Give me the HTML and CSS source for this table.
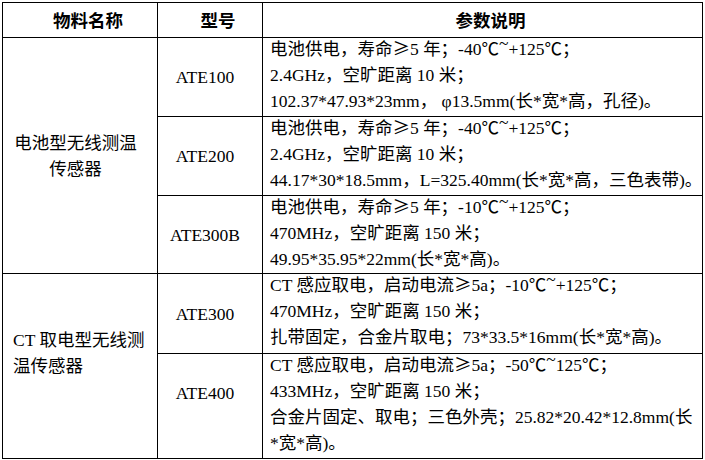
FILE: index.html
```html
<!DOCTYPE html>
<html lang="zh-CN">
<head>
<meta charset="utf-8">
<title>传感器参数</title>
<link rel="stylesheet" href="styles.css">
</head>
<body>
<div class="sheet">
  <div class="cell head">物料名称</div>
  <div class="cell head">型号</div>
  <div class="cell head">参数说明</div>

  <div class="cell name name-a">电池型无线测温<br>传感器</div>
  <div class="cell model">ATE100</div>
  <div class="cell spec">
    <div class="lines">
      <div>电池供电，寿命<span class="cjk">≥</span>5 年；-40℃<span class="tilde">~</span>+125℃；</div>
      <div>2.4GHz，空旷距离 10 米；</div>
      <div>102.37*47.93*23mm， φ13.5mm(长*宽*高，孔径)。</div>
    </div>
  </div>

  <div class="cell model">ATE200</div>
  <div class="cell spec">
    <div class="lines">
      <div>电池供电，寿命<span class="cjk">≥</span>5 年；-40℃<span class="tilde">~</span>+125℃；</div>
      <div>2.4GHz，空旷距离 10 米；</div>
      <div>44.17*30*18.5mm，L=325.40mm(长*宽*高，三色表带)。</div>
    </div>
  </div>

  <div class="cell model">ATE300B</div>
  <div class="cell spec">
    <div class="lines">
      <div>电池供电，寿命<span class="cjk">≥</span>5 年；-10℃<span class="tilde">~</span>+125℃；</div>
      <div>470MHz，空旷距离 150 米；</div>
      <div>49.95*35.95*22mm(长*宽*高)。</div>
    </div>
  </div>

  <div class="cell name name-b">CT 取电型无线测<br>温传感器</div>
  <div class="cell model">ATE300</div>
  <div class="cell spec">
    <div class="lines">
      <div>CT 感应取电，启动电流<span class="cjk">≥</span>5a；-10℃<span class="tilde">~</span>+125℃；</div>
      <div>470MHz，空旷距离 150 米；</div>
      <div>扎带固定，合金片取电；73*33.5*16mm(长*宽*高)。</div>
    </div>
  </div>

  <div class="cell model model-last">ATE400</div>
  <div class="cell spec">
    <div class="lines">
      <div>CT 感应取电，启动电流<span class="cjk">≥</span>5a；-50℃<span class="tilde">~</span>125℃；</div>
      <div>433MHz，空旷距离 150 米；</div>
      <div>合金片固定、取电；三色外壳；25.82*20.42*12.8mm(长</div>
      <div>*宽*高)。</div>
    </div>
  </div>
</div>
</body>
</html>
```

FILE: styles.css
```css
html, body {
  margin: 0;
  padding: 0;
  background: #ffffff;
}

body {
  font-family: "Liberation Serif", "Noto Sans CJK SC", serif;
  font-size: 17.5px;
  color: #000000;
}

.sheet {
  display: grid;
  grid-template-columns: 154px 104px 439px;
  grid-template-rows: 34px 78px 78px 77px 79px 104px;
  gap: 1px;
  background: #000000;
  border: 1px solid #000000;
  width: max-content;
  margin: 2px;
}

.cell {
  background: #ffffff;
  display: flex;
  align-items: center;
  line-height: 26px;
  white-space: nowrap;
}

.cjk {
  font-family: "Noto Sans CJK SC", sans-serif;
}

.tilde {
  display: inline-block;
  vertical-align: 0.35em;
  line-height: 1;
}

.head {
  justify-content: center;
  font-weight: bold;
  font-family: "Noto Sans CJK SC", sans-serif;
  padding-left: 16px;
}

.name {
  grid-column: 1;
}

.name-a {
  grid-row: 2 / span 3;
  justify-content: center;
  text-align: center;
  padding-right: 9px;
}

.name-b {
  grid-row: 5 / span 2;
  justify-content: flex-start;
  text-align: left;
  padding-left: 10px;
  padding-bottom: 26px;
}

.model {
  grid-column: 2;
  justify-content: center;
  padding-right: 10px;
}

.model-last {
  padding-bottom: 26px;
}

.spec {
  grid-column: 3;
  align-items: flex-start;
  padding-left: 7px;
}

.lines {
  margin-top: -3px;
}
```
